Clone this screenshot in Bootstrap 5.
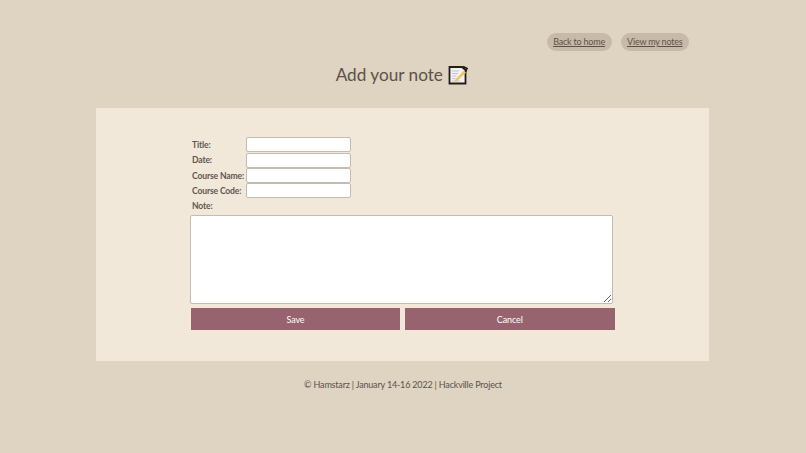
<!doctype html>
<html lang="en"><head><meta charset="utf-8"><title>Add note</title>
<link href="https://cdn.jsdelivr.net/npm/bootstrap@5.3.0/dist/css/bootstrap.min.css" rel="stylesheet">
<style>
html,body{height:100%}
body{background:#dfd3c1;color:#5a524a;font-family:"Lato","Noto Sans",sans-serif;font-size:9px;letter-spacing:-.18px}
.page-wrap{width:806px;height:453px;overflow:hidden}
.top-links{padding:33px 117px 0 0;gap:9px;height:62px}
.pill-link{background:#c8baa9;color:#5a524a;border-radius:9px;padding:0 6.5px;height:18px;line-height:18px;font-size:9px;letter-spacing:-.2px}
.page-title{font-size:17.2px;font-weight:400;line-height:24px;height:46px;margin:0;color:#5a524a;padding:1px 2px 0 0;letter-spacing:0}
.title-ico{width:20px;height:20px;vertical-align:-4px;margin-left:1px}
.note-panel{width:613px;height:253px;margin-left:96px;background:#f2e8da;padding:29px 0 0 95px}
.note-form{width:425px}
.field-row{height:15.4px}
.field-label{width:55px;padding:1px 0 0 1px;font-weight:700;font-size:8.6px;letter-spacing:-.16px;white-space:nowrap;color:#5f574f}
.field-input{width:105px;height:15px;border:1px solid #c2bcb2;border-radius:2px;background:#fff;padding:0 2px;outline:0}
.note-area{display:block;width:423px;height:89px;border:1px solid #c2bcb2;border-radius:2px;background:#fff;margin:0 0 4px -1px;outline:0}
.note-label{height:12px;line-height:12px;margin-top:1px;margin-bottom:3px;padding-left:1px;font-weight:700;font-size:8.6px;letter-spacing:-.16px;color:#5f574f}
.act-btn{background:#96636e;color:#fff;border:0;border-radius:0;height:22px;padding:0;font-size:9px;line-height:24px;letter-spacing:-.1px}
.act-save{width:209px}
.act-cancel{width:209.5px}
.act-gap{gap:5px}
.foot-note{padding-top:17px;line-height:13px}
</style></head>
<body>
<div class="page-wrap">
<div class="d-flex justify-content-end top-links">
<a class="pill-link" href="#">Back to home</a>
<a class="pill-link" href="#">View my notes</a>
</div>
<h1 class="page-title text-center">Add your note <svg class="title-ico" viewBox="0 0 20 20" aria-hidden="true"><path d="M1.500 2H14L17.500 5V18.500H1.500Z" fill="#f1f1f3" stroke="#211d18" stroke-width="1.800"/><path d="M4 6H11M4 8.500H10M4 11H8.500M4 13.500H7.500M4 16H12" stroke="#b9b9c4" stroke-width=".8"/><path d="M6.500 15.500L16 5.500L18 7.500L8.500 16.500Z" fill="#efc35d"/><path d="M15 1.500L19 3.500L17.500 7" fill="none" stroke="#211d18" stroke-width="1.600"/></svg></h1>
<div class="note-panel">
<form class="note-form">
<div class="d-flex align-items-center field-row"><label class="field-label">Title:</label><input class="field-input"></div>
<div class="d-flex align-items-center field-row"><label class="field-label">Date:</label><input class="field-input"></div>
<div class="d-flex align-items-center field-row"><label class="field-label">Course Name:</label><input class="field-input"></div>
<div class="d-flex align-items-center field-row"><label class="field-label">Course Code:</label><input class="field-input"></div>
<div class="note-label">Note:</div>
<textarea class="note-area"></textarea>
<div class="d-flex act-gap"><button type="button" class="btn act-btn act-save">Save</button><button type="button" class="btn act-btn act-cancel">Cancel</button></div>
</form>
</div>
<div class="foot-note text-center">© Hamstarz | January 14-16 2022 | Hackville Project</div>
</div>
<script src="https://cdn.jsdelivr.net/npm/bootstrap@5.3.0/dist/js/bootstrap.bundle.min.js"></script>
</body></html>
